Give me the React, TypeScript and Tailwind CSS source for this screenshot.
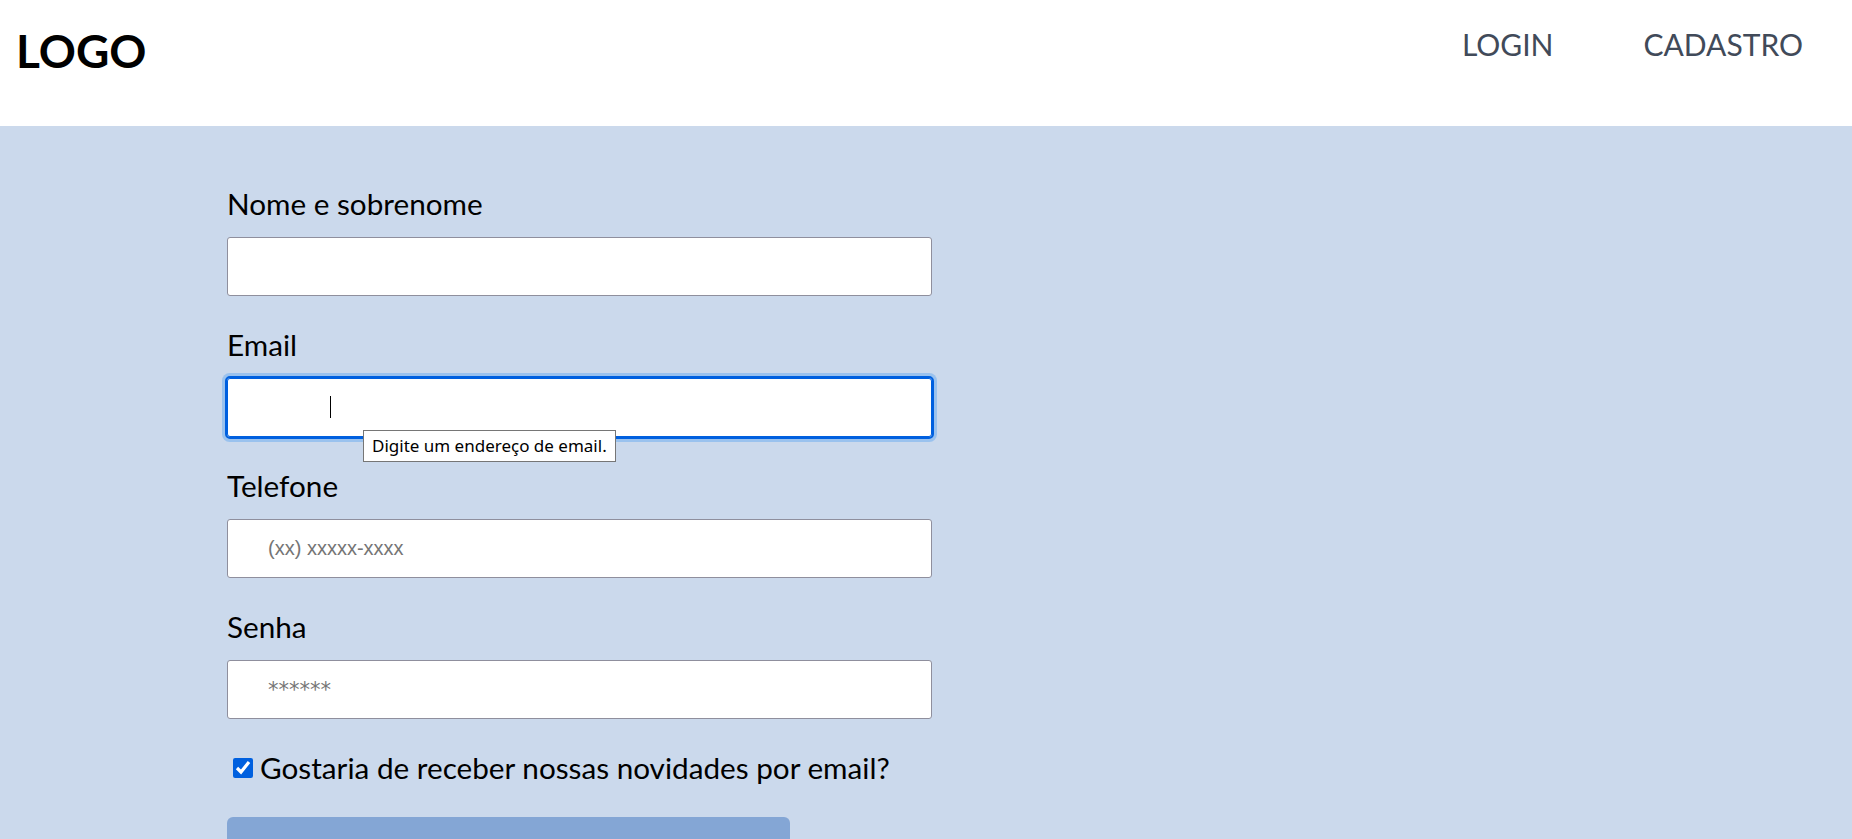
import React from "react";

const labelCls = "block text-[29.7px] leading-[34px] text-black";
const inputCls =
  "mt-4 block h-[59px] w-full rounded-[3px] border border-[#8f8f9d] bg-white pl-[40px] font-['Liberation_Sans',Arial,sans-serif] text-[20px] text-black placeholder:text-[#757575] outline-none";

export default function App() {
  return (
    <div className="min-h-screen bg-[#cbd9ec] font-['Lato',sans-serif]">
      <header className="flex h-[126px] items-start justify-between bg-white pl-[16px] pr-[49px] pt-[24px]">
        <div className="text-[46px] font-bold leading-[54px] text-black">LOGO</div>
        <nav className="flex gap-[90px] pt-[2px] text-[30px] leading-[36px] text-[#414a59]">
          <a href="#">LOGIN</a>
          <a href="#">CADASTRO</a>
        </nav>
      </header>

      <main className="pl-[227px] pt-[61px]">
        <form className="flex w-[705px] flex-col" onSubmit={(e) => e.preventDefault()}>
          <div>
            <label className={labelCls}>Nome e sobrenome</label>
            <input type="text" readOnly className={inputCls} />
          </div>

          <div className="mt-[32px]">
            <label className={labelCls}>Email</label>
            <div className="relative pt-4">
              <input
                type="email"
                readOnly
                className="block h-[59px] w-full rounded-[3px] border border-[#0060df] bg-white pl-[40px] font-['Liberation_Sans',Arial,sans-serif] text-[20px] outline-2 outline-[#0060df] outline-solid shadow-[0_0_0_5px_#9ac2ee]"
              />
              <span className="absolute left-[103px] top-[34px] h-[22px] w-px bg-black" />
              <div className="absolute left-[136px] top-[68px] whitespace-nowrap border border-[#767676] bg-white px-[8px] py-[4px] font-['Noto_Sans',sans-serif] text-[17px] leading-[22px] text-black">
                Digite um endereço de email.
              </div>
            </div>
          </div>

          <div className="mt-[32px]">
            <label className={labelCls}>Telefone</label>
            <input type="tel" readOnly placeholder="(xx) xxxxx-xxxx" className={inputCls} />
          </div>

          <div className="mt-[32px]">
            <label className={labelCls}>Senha</label>
            <input
              type="password"
              readOnly
              placeholder="******"
              className="mt-4 block h-[59px] w-full rounded-[3px] border border-[#8f8f9d] bg-white pl-[40px] font-['DejaVu_Sans',sans-serif] text-[21px] text-black placeholder:text-[#757575] outline-none"
            />
          </div>

          <label className="mt-[32px] flex items-center gap-[7px] text-[29.7px] leading-[34px] text-black">
            <input
              type="checkbox"
              defaultChecked
              className="ml-[6px] h-[20px] w-[20px] accent-[#0060df]"
            />
            Gostaria de receber nossas novidades por email?
          </label>

          <button
            type="submit"
            className="mt-[32px] h-[60px] w-[563px] rounded-[6px] bg-[#84a6d5]"
          />
        </form>
      </main>
    </div>
  );
}
